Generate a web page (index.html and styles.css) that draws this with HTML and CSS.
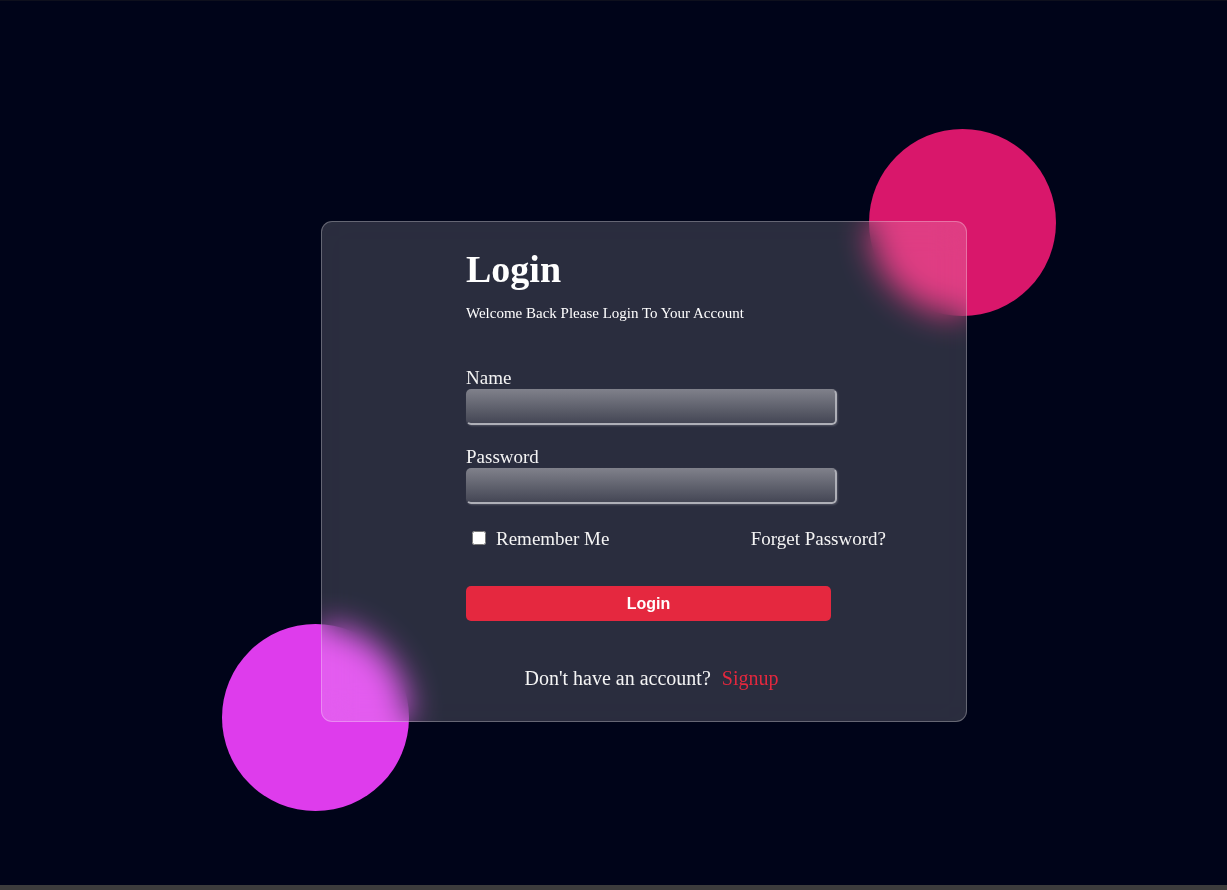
FILE: index.html
```html
<!DOCTYPE html>
<html lang="en">
<head>
<meta charset="utf-8">
<title>Login</title>
<link rel="stylesheet" href="styles.css">
</head>
<body>
<div class="page">
  <div class="stage">
    <span class="blob blob-pink"></span>
    <span class="blob blob-violet"></span>
    <form class="card">
      <h1 class="title">Login</h1>
      <p class="subtitle">Welcome Back Please Login To Your Account</p>
      <label class="field-label" for="name">Name</label>
      <input class="field" id="name" type="text">
      <label class="field-label field-label-next" for="password">Password</label>
      <input class="field" id="password" type="password">
      <div class="options">
        <label class="remember"><input class="check" type="checkbox">Remember Me</label>
        <a class="forgot">Forget Password?</a>
      </div>
      <button class="submit" type="button">Login</button>
      <p class="signup">Don't have an account? <a class="signup-link">Signup</a></p>
    </form>
  </div>
</div>
<div class="bottom-bar"></div>
</body>
</html>
```

FILE: styles.css
```css
html, body {
  margin: 0;
  padding: 0;
}

body {
  background: #000419;
  font-family: "Liberation Serif", "Times New Roman", serif;
  color: #f2f2f2;
}

.page {
  box-sizing: border-box;
  height: 885px;
  border-top: 1px solid #0e101d;
  padding: 220px 0 0 321px;
  overflow: hidden;
}

.stage {
  position: relative;
  width: 646px;
}

.blob {
  position: absolute;
  width: 187px;
  height: 187px;
  border-radius: 50%;
}

.blob-pink {
  left: 548px;
  top: -92px;
  background: #d9176b;
}

.blob-violet {
  left: -99px;
  top: 403px;
  background: #de3cec;
}

.card {
  position: relative;
  z-index: 1;
  box-sizing: border-box;
  width: 646px;
  height: 501px;
  margin: 0;
  padding: 24px 0 0 144px;
  border: 1px solid rgba(255, 255, 255, 0.28);
  border-radius: 11px;
  background: rgba(255, 255, 255, 0.165);
  -webkit-backdrop-filter: blur(16px);
  backdrop-filter: blur(16px);
}

.title {
  margin: 0;
  font-size: 38px;
  line-height: 46px;
  font-weight: 700;
  color: #ffffff;
}

.subtitle {
  margin: 12px 0 0;
  font-size: 15px;
  line-height: 18px;
  color: #ffffff;
}

.field-label {
  display: block;
  margin-top: 45px;
  font-size: 19px;
  line-height: 22px;
  color: #f4f4f4;
}

.field-label-next {
  margin-top: 21px;
}

.field {
  display: block;
  box-sizing: border-box;
  width: 371px;
  height: 36px;
  margin: 0;
  padding: 0 8px;
  border-radius: 5px;
  border: 2px solid;
  border-color: transparent #aeafb7 #aeafb7 transparent;
  background: linear-gradient(#80818b, #5d5f6b 55%, #414352);
  background-origin: border-box;
  box-shadow: 1px 1px 2px rgba(255, 255, 255, 0.18);
  color: #fff;
  font: 16px "Liberation Sans", Arial, sans-serif;
  outline: none;
}

.options {
  display: flex;
  justify-content: space-between;
  align-items: baseline;
  width: 420px;
  margin-top: 24px;
  font-size: 19px;
  line-height: 22px;
}

.remember {
  color: #f4f4f4;
}

.check {
  width: 14px;
  height: 14px;
  margin: 3px 10px 4px 6px;
}

.forgot {
  color: #f4f4f4;
}

.submit {
  display: block;
  width: 365px;
  height: 35px;
  margin: 36px 0 0;
  padding: 0;
  border: 0;
  border-radius: 5px;
  background: #e5283f;
  color: #ffffff;
  font: 700 16px/34px "Liberation Sans", Arial, sans-serif;
}

.signup {
  width: 371px;
  margin: 46px 0 0;
  text-align: center;
  font-size: 20px;
  line-height: 22px;
  color: #f4f4f4;
}

.signup-link {
  margin-left: 6px;
  color: #e3283e;
}

.bottom-bar {
  height: 5px;
  background: #3c3c3c;
}
```
